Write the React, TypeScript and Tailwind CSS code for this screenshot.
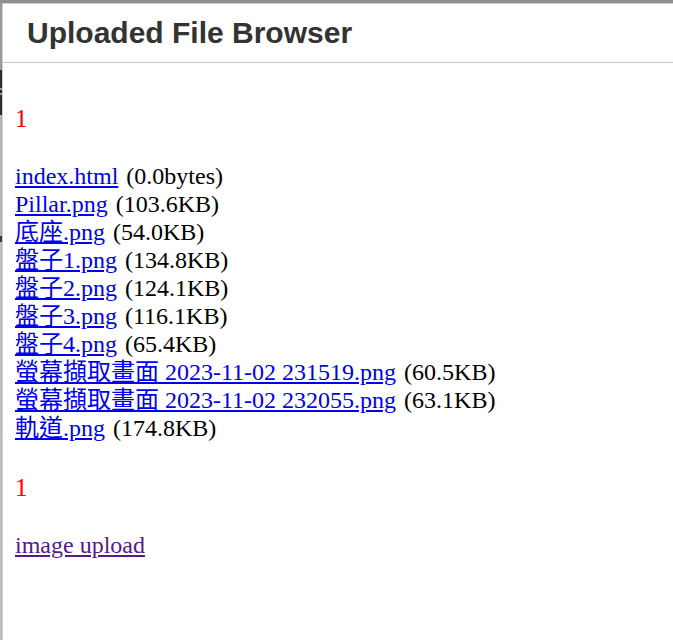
const files = [
  { name: "index.html", size: "0.0bytes" },
  { name: "Pillar.png", size: "103.6KB" },
  { name: "底座.png", size: "54.0KB" },
  { name: "盤子1.png", size: "134.8KB" },
  { name: "盤子2.png", size: "124.1KB" },
  { name: "盤子3.png", size: "116.1KB" },
  { name: "盤子4.png", size: "65.4KB" },
  { name: "螢幕擷取畫面 2023-11-02 231519.png", size: "60.5KB" },
  { name: "螢幕擷取畫面 2023-11-02 232055.png", size: "63.1KB" },
  { name: "軌道.png", size: "174.8KB" },
];

const serif = { fontFamily: '"Liberation Serif", "Noto Sans CJK TC", serif' };

function App() {
  return (
    <div className="flex flex-col w-[673px] h-[640px] bg-[#8f8f8f] overflow-hidden">
      {/* top frame */}
      <div className="h-[3px] shrink-0" />
      <div className="flex flex-1">
        {/* left frame with bits of the window behind */}
        <div className="flex flex-col w-[2px] shrink-0">
          <div className="h-[67px] bg-[#9a9a9a]" />
          <div className="h-[18px] bg-[#2a2a2a]" />
          <div className="h-[2px] bg-[#9a9a9a]" />
          <div className="h-[3px] bg-[#2a2a2a]" />
          <div className="h-[2px] bg-[#9a9a9a]" />
          <div className="h-[20px] bg-[#2a2a2a]" />
          <div className="h-[121px] bg-[#b4b4b4]" />
          <div className="h-[6px] bg-[#3a3a3a]" />
          <div className="flex-1 bg-[#bdbdbd]" />
        </div>

        <div className="flex-1 bg-white border-t border-l border-[#d0d0d0]">
          <div className="border-b border-[#c8c8c8] pl-[24px] pt-[11px] pb-[12px]">
            <h1
              className="text-[30px] font-bold text-[#333333] leading-[35px]"
              style={{ fontFamily: '"Liberation Sans", Arial, sans-serif' }}
            >
              Uploaded File Browser
            </h1>
          </div>

          <div className="pl-[12px] pt-[42px] text-[24px] leading-[28px] text-black" style={serif}>
            <p className="text-[#ff0000] text-[25px]">1</p>

            <ul className="mt-[29px]">
              {files.map((f) => (
                <li key={f.name}>
                  <a href="#" className="text-[#0000ee] underline">
                    {f.name}
                  </a>{" "}
                  <span className="ml-[2px]">({f.size})</span>
                </li>
              ))}
            </ul>

            <p className="mt-[32px] text-[#ff0000] text-[25px]">1</p>

            <p className="mt-[29px]">
              <a href="#" className="text-[#551a8b] underline">
                image upload
              </a>
            </p>
          </div>
        </div>
      </div>
    </div>
  );
}

export default App;
